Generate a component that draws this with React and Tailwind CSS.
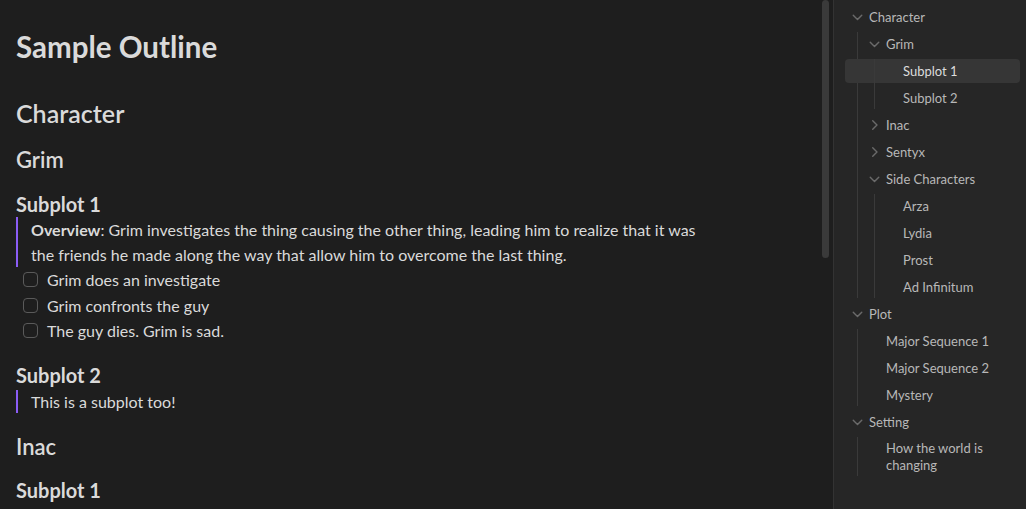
import React from "react";

const Chevron = ({ open }) => (
  <svg width="18" height="18" viewBox="0 0 24 24" fill="none" stroke="#6a6a6a" strokeWidth="2" strokeLinecap="round" strokeLinejoin="round">
    {open ? <path d="M6 9.5l6 6 6-6" /> : <path d="M9.5 6l6 6-6 6" />}
  </svg>
);

const Check = ({ children }) => (
  <div className="flex items-center h-[25.5px]">
    <div className="ml-[7px] w-[15px] h-[15px] rounded-[4px] border border-[#5a5a5a]" />
    <span className="ml-[9px]">{children}</span>
  </div>
);

function Row({ level, chevron, open, active, children, tall }) {
  return (
    <div className={tall ? "py-[1.5px]" : "h-[27px] py-[1.5px]"}>
      <div
        className={`flex rounded-[4px] ${active ? "bg-[#363636] text-[#dcdcdc]" : "text-[#b8b8b8]"} ${tall ? "items-start py-[3px]" : "h-[24px] items-center"}`}
        style={{ paddingLeft: 4 + level * 17 }}
      >
        <div className="w-[17px] mr-[3px] flex justify-center shrink-0">{chevron ? <Chevron open={open} /> : null}</div>
        <div className="leading-[17px]">{children}</div>
      </div>
    </div>
  );
}

const Group = ({ level, children }) => (
  <div className="relative">
    <div className="absolute top-[1px] bottom-[3px] w-px bg-[#3a3a3a]" style={{ left: 4 + level * 17 + 8 }} />
    {children}
  </div>
);

export default function App() {
  return (
    <div className="flex w-[1026px] h-[509px] overflow-hidden bg-[#1e1e1e]" style={{ fontFamily: '"Lato", "Noto Sans", sans-serif' }}>
      <div className="relative flex-1 h-full">
        <div className="pl-4 pt-[28px] text-[#dadada] text-[16px] w-[720px]">
          <h1 className="text-[29.5px] font-bold leading-[38px]">Sample Outline</h1>
          <h2 className="mt-[31px] text-[25px] font-semibold leading-[32px]">Character</h2>
          <h3 className="mt-[17px] text-[22px] font-semibold leading-[28px]">Grim</h3>
          <h4 className="mt-[18px] text-[20px] font-bold leading-[24px]">Subplot 1</h4>
          <div className="mt-[1px] border-l-2 border-[#8a5cf5] pl-[13px] leading-[25px] w-[705px]">
            <b className="font-bold">Overview</b>: Grim investigates the thing causing the other thing, leading him to realize that it was the friends he made along the way that allow him to overcome the last thing.
          </div>
          <div className="leading-[25.5px]">
            <Check>Grim does an investigate</Check>
            <Check>Grim confronts the guy</Check>
            <Check>The guy dies. Grim is sad.</Check>
          </div>
          <h4 className="mt-[19px] text-[20px] font-bold leading-[24px]">Subplot 2</h4>
          <div className="mt-[3px] border-l-2 border-[#8a5cf5] pl-[13px] leading-[23px]">This is a subplot too!</div>
          <h3 className="mt-[20px] text-[22px] font-semibold leading-[28px]">Inac</h3>
          <h4 className="mt-[17px] text-[20px] font-bold leading-[24px]">Subplot 1</h4>
        </div>
        <div className="absolute right-[4px] top-0 w-[7px] h-[258px] rounded-[4px] bg-[#3a3a3a]" />
      </div>
      <div className="w-[193px] h-full border-l border-[#333333] bg-[#262626] pt-[3.5px] pl-[11px] pr-[6px] text-[13px]">
        <Row level={0} chevron open>Character</Row>
        <Group level={0}>
          <Row level={1} chevron open>Grim</Row>
          <Group level={1}>
            <Row level={2} active>Subplot 1</Row>
            <Row level={2}>Subplot 2</Row>
          </Group>
          <Row level={1} chevron>Inac</Row>
          <Row level={1} chevron>Sentyx</Row>
          <Row level={1} chevron open>Side Characters</Row>
          <Group level={1}>
            <Row level={2}>Arza</Row>
            <Row level={2}>Lydia</Row>
            <Row level={2}>Prost</Row>
            <Row level={2}>Ad Infinitum</Row>
          </Group>
        </Group>
        <Row level={0} chevron open>Plot</Row>
        <Group level={0}>
          <Row level={1}>Major Sequence 1</Row>
          <Row level={1}>Major Sequence 2</Row>
          <Row level={1}>Mystery</Row>
        </Group>
        <Row level={0} chevron open>Setting</Row>
        <Group level={0}>
          <Row level={1} tall>How the world is changing</Row>
        </Group>
      </div>
    </div>
  );
}
